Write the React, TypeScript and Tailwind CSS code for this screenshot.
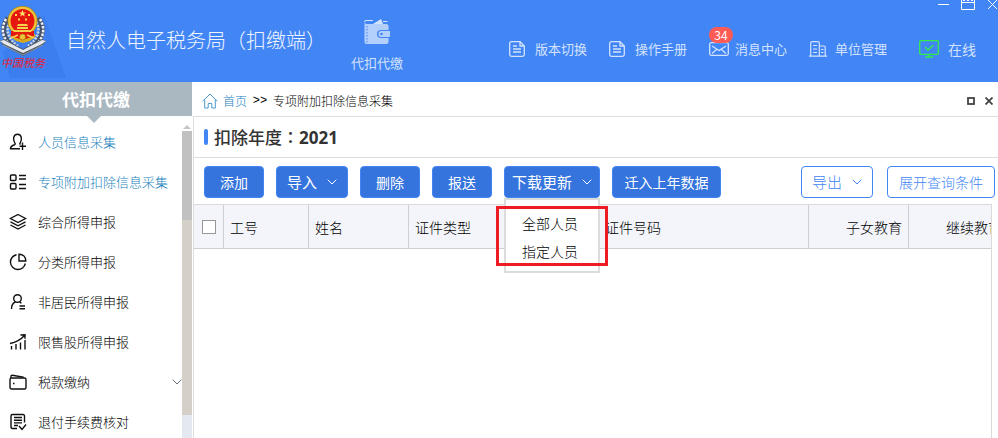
import React from 'react';
import { clsx } from 'clsx';

const Chevron = ({ className }: { className?: string }) => (
    <svg viewBox="0 0 10 6" className={clsx("w-[10px] h-[6px] shrink-0", className)} fill="none" stroke="currentColor">
        <path d="M.7.7 5 5 9.3.7" />
    </svg>
);

const Emblem = () => (
    <svg viewBox="0 0 70 82" className="w-[70px] h-[82px]" fill="none">
        <path d="M3 52 44 15 66 78H10Z" fill="#3c7eef" />
        {/* Wheat wreath */}
        <path d="M8 18C1 27 2 40 16 48M38 18c7 9 6 22-8 30" stroke="#46536a" strokeWidth="5" />
        <path d="M6 19C0 29 2 41 16 49M40 19c6 10 4 22-10 30" stroke="#eef1f5" strokeWidth="2.500" strokeDasharray="2.500 1.300" />
        <path d="M10 22C5 30 8 39 18 46M36 22c5 8 2 17-8 24" stroke="#cfd6df" strokeWidth="2.500" strokeDasharray="2 1.300" />
        {/* Ribbon */}
        <path d="m0 41 4-2 19 10 19-10 4 2-3 4-20 11L3 45Z" fill="#4c5663" />
        <path d="m0 41 4-1 19 10 19-10 4 1-4 3-19 9L4 44Z" fill="#e6eaef" />
        <path d="m3 45 20 10 20-10" stroke="#8d97a5" />
        {/* National emblem */}
        <path d="M10 36c2-3 5-4 7-4h12c2 0 5 1 7 4l-6 5-7 2-7-2Z" fill="#d9a91f" />
        <circle cx="22.500" cy="21" r="15" fill="#b98a16" />
        <circle cx="22.500" cy="21" r="14.200" fill="#efc63a" />
        <circle cx="22.500" cy="21" r="12" fill="#e5170f" />
        <path d="M11 31h23v5l-11.500 4L11 36Z" fill="#e5170f" />
        <path d="m22.500 10 1 2.400 2.600.1-2.100 1.600.8 2.500-2.300-1.500-2.300 1.500.8-2.500-2.100-1.600 2.600-.1Z" fill="#ffe36b" />
        <path d="M15 14h2v2h-2zM28 14h2v2h-2zM18 18.500h2v2h-2zM25 18.500h2v2h-2z" fill="#ffd94d" />
        <path d="M18 24h9l1 2H17ZM17 27h11v2H17ZM13.500 30h18v2h-18Z" fill="#f6d04a" />
        <circle cx="22.500" cy="37" r="3" fill="#efc63a" stroke="#a87508" strokeWidth=".7" />
        <path d="m11 38 7-3M34 38l-7-3" stroke="#f6d04a" strokeWidth="1.500" />
    </svg>
);

const DocIcon = () => (
    <svg viewBox="0 0 16 16" className="w-4 h-4" fill="none" stroke="currentColor" strokeWidth="1.300">
        <path d="M11 .7H2.500Q.7.7.7 2.500v11q0 1.800 1.800 1.800h11q1.800 0 1.800-1.800V5Z" />
        <path d="M11 .7V5h4.300M4 5h4M4 8h8M4 11h8" />
    </svg>
);

const MailIcon = () => (
    <svg viewBox="0 0 20 14" className="w-5 h-[14px]" fill="none" stroke="currentColor" strokeWidth="1.300">
        <rect x=".7" y=".7" width="18.600" height="12.600" rx="1.500" />
        <path d="m3 4 7 4.500L17 4M3 11.500 7.500 7.500M17 11.500l-4.500-4" />
    </svg>
);

const BuildingIcon = () => (
    <svg viewBox="0 0 18 16" className="w-[18px] h-4" fill="none" stroke="currentColor" strokeWidth="1.200">
        <path d="M0 15.200h18M1.700 15V2q0-1.300 1.300-1.300h6q1.300 0 1.300 1.300v13M10.300 5H15q1.200 0 1.200 1.200V15" />
        <path d="M4 4.500h4M4 8h4M4 11.500h4M12 8.500h2.500M12 11.500h2.500" />
    </svg>
);

const MonitorIcon = () => (
    <svg viewBox="0 0 20 18" className="w-5 h-[18px]" fill="none" stroke="#35ea4e" strokeWidth="1.300">
        <rect x=".7" y=".7" width="18.600" height="13.600" rx="1" />
        <path d="m6 7 3 3 5.500-5M10 14.500v2M6 17h8" />
    </svg>
);

const icon = (children: React.ReactNode) => (
    <svg viewBox="0 0 18 18" className="w-[18px] h-[18px] shrink-0" fill="none" stroke="#111" strokeWidth="1.400">
        {children}
    </svg>
);

const navItems = [
    {
        label: '人员信息采集',
        active: true,
        icon: icon(<path d="M11 15.800H1.500c0-3 2-3.300 4-4 1-.4.900-1.200.3-2C3.800 7 4 1.200 8.500 1.200s4.700 5.800 2.700 8.600c-.5.800-.7 1.300.3 1.700M13.500 9.500v7.500M10.500 13.200H17" />),
    },
    {
        label: '专项附加扣除信息采集',
        active: true,
        icon: icon(<><rect x="1.500" y="2" width="5.500" height="5.500" rx="1" /><rect x="1.500" y="10.500" width="5.500" height="5.500" rx="1" /><path d="M10 2.500h7M10 6h7M10 11.500h7M10 15.500h7" /></>),
    },
    {
        label: '综合所得申报',
        icon: icon(<path d="m9 1.500 7.500 4L9 9.500l-7.500-4ZM1.500 8.800 9 12.800l7.500-4M1.500 12 9 16l7.500-4" />),
    },
    {
        label: '分类所得申报',
        icon: icon(<><path d="M7.500 1.700A7.500 7.500 0 1 0 16.300 10.500" /><path d="M10 1.200V8h6.800c0-4-2.800-6.800-6.800-6.800Z" /></>),
    },
    {
        label: '非居民所得申报',
        icon: icon(<><circle cx="8.500" cy="5.500" r="3.800" /><path d="M6.500 9C3.500 10 2.500 12.500 2.500 16M10.500 9.200l2 1M10.500 13h5.500M10.500 15.800h5.500" /></>),
    },
    {
        label: '限售股所得申报',
        icon: icon(<path d="M2.500 16.500v-3.500M7 16.500V11M11.500 16.500V9.500M16 16.500V7M1 10.500C6 9.500 11.500 7 15.500 2.500M11.500 2l4.500-.3v4" />),
    },
    {
        label: '税款缴纳',
        expandable: true,
        icon: icon(<><rect x="1" y="5" width="16" height="11" rx="1.500" /><path d="M2 5V3.500q0-1.300 1.300-1.200L14 4v1M4 10.500h1.500" /></>),
    },
    {
        label: '退付手续费核对',
        icon: icon(<path d="M15.500 9.500V3q0-1.500-1.500-1.500H3.500Q2 1.500 2 3v11q0 1.500 1.500 1.500H8M5 4.500h8M5 7.200h8M5 9.900h8M5 12.500h4M10 13l3 3.500 4-5" />),
    },
];

const tools = [
    { label: '版本切换', icon: <DocIcon /> },
    { label: '操作手册', icon: <DocIcon /> },
    { label: '消息中心', icon: <MailIcon />, badge: 34 },
    { label: '单位管理', icon: <BuildingIcon /> },
];

const columns = [
    { label: '工号', width: 'w-[85px]' },
    { label: '姓名', width: 'w-[100px]' },
    { label: '证件类型', width: 'w-[190px]' },
    { label: '证件号码', width: 'w-[210px]' },
    { label: '子女教育', width: 'w-[100px]', right: true },
    { label: '继续教育', width: 'w-[100px]', right: true },
];

const primary = "h-8 rounded bg-[#3574dc] border border-[#4285f5] text-white text-sm";
const outline = "h-8 rounded bg-white border border-[#4285f5] text-[#4285f5] font-light";

const Header = () => (
    <header className="relative h-[82px] shrink-0 flex bg-[#4285f5] text-[#d3e3fd]">
        <div className="relative w-[66px] shrink-0">
            <Emblem />
            <span className="absolute left-0 top-[54px] w-[46px] text-center text-[11px] leading-[16px] italic text-[#e8202c] whitespace-nowrap">中国税务</span>
        </div>
        <h1 className="h-20 flex items-center text-xl font-light text-[#f0f6ff] whitespace-nowrap">自然人电子税务局（扣缴端）</h1>
        <a href="#withhold" className="mt-[19px] ml-[25px] flex flex-col items-center text-[13px] leading-[18px] whitespace-nowrap">
            <svg viewBox="0 0 28 26" className="w-[28px] h-[26px] mb-[9px]">
                <path d="M1.500 3q0-1.500 1.500-1.500h7M20 2.500h4.500" stroke="#d3e3fd" fill="none" />
                <path d="m10 5 8-5 2 5Z" fill="#d3e3fd" />
                <path d="M1.500 3Q2 5 4 5h19q2.500 0 2.500 2v4H18q-4 0-4 4t4 4h7.500v4q0 2-2 2H3.500q-2 0-2-2Z" fill="#b3cffb" />
                <path d="M4 7v17" stroke="#4285f5" strokeDasharray="1.500 1.500" />
                <path d="M18 12h9v6h-9q-2.500 0-2.500-3t2.500-3Z" fill="#b3cffb" />
                <circle cx="18.500" cy="15" r="1.300" fill="#4285f5" />
            </svg>
            代扣代缴
        </a>
        <nav className="ml-auto mt-[15px] pr-[22px] flex items-center gap-[22px] text-[13px] whitespace-nowrap">
            {tools.map((item) => (
                <a key={item.label} href="#tool" className="relative flex items-center">
                    <span className="w-[26px]">{item.icon}</span>
                    {item.label}
                    {item.badge && (
                        <span className="absolute left-0 -top-3 w-6 h-4 rounded-full bg-[#ff5b55] text-white text-xs leading-4 text-center">{item.badge}</span>
                    )}
                </a>
            ))}
            <a href="#status" className="ml-2.5 flex items-center text-sm">
                <span className="w-[29px]"><MonitorIcon /></span>
                在线
            </a>
        </nav>
        <div className="absolute right-0 top-0 flex gap-3 text-white">
            <button aria-label="最小化" className="w-[11px] h-[10px]">
                <svg viewBox="0 0 11 10" fill="none" stroke="currentColor"><path d="M0 4.500h11" /></svg>
            </button>
            <button aria-label="还原" className="w-[14px] h-[10px]">
                <svg viewBox="0 0 14 10" fill="none" stroke="currentColor"><path d="M.5 0v9.500h13V0M0 2.500h14M2 .5h2M6 .5h2M10 .5h2" /></svg>
            </button>
            <button aria-label="关闭" className="w-[11px] h-[10px]">
                <svg viewBox="0 0 11 10" fill="none" stroke="currentColor"><path d="m1 0 9 9M10 0 1 9" /></svg>
            </button>
        </div>
    </header>
);

const Sidebar = () => (
    <aside className="w-48 shrink-0 flex flex-col bg-white">
        <h2 className="relative h-[34px] shrink-0 flex items-center justify-center bg-[#aab8c2] text-white text-[17px] font-bold">
            代扣代缴
            <svg viewBox="0 0 14 7" className="absolute top-full left-[87px] w-[14px] h-[7px]"><path d="M0 0h14L7 7Z" fill="#aab8c2" /></svg>
        </h2>
        <div className="flex-1 min-h-0 flex">
            <nav className="flex-1 pt-[6px] overflow-hidden">
                {navItems.map((item) => (
                    <a
                        key={item.label}
                        href="#nav"
                        className={clsx(
                            "h-10 pl-[9px] flex items-center gap-[11px] text-[13px] font-light whitespace-nowrap",
                            item.active ? "text-[#1a7fbd]" : "text-black"
                        )}
                    >
                        {item.icon}
                        {item.label}
                        {item.expandable && <Chevron className="ml-auto text-gray-500" />}
                    </a>
                ))}
            </nav>
            {/* Scrollbar */}
            <div className="w-[10px] flex flex-col bg-[#e4e9f1]">
                <div className="h-[15px] pt-2 bg-white">
                    <svg viewBox="0 0 10 5" className="w-[10px] h-[5px]"><path d="M1 5h8L5 1Z" fill="#c6c6c6" /></svg>
                </div>
                <div className="h-[89px] bg-[#c1c1c1]"></div>
                <div className="flex-1 mb-[23px] bg-[#d4d0c8]"></div>
            </div>
        </div>
    </aside>
);

const Toolbar = () => (
    <div className="h-[46px] pt-[2px] pl-[10px] pr-[3px] flex items-center gap-3 whitespace-nowrap">
        <button className={clsx(primary, "w-[60px]")}>添加</button>
        <button className={clsx(primary, "w-[72px] flex items-center justify-between px-[10px] text-[15px]")}>导入<Chevron /></button>
        <button className={clsx(primary, "w-[60px]")}>删除</button>
        <button className={clsx(primary, "w-[60px]")}>报送</button>
        <div className="relative">
            <button aria-expanded="true" className={clsx(primary, "w-24 flex items-center justify-between px-[7px] text-[15px]")}>下载更新<Chevron /></button>
            <div className="absolute z-10 top-full left-0 w-24 h-[75px] pt-[9px] bg-white border-2 border-[#dcdcdc] text-sm font-light text-black">
                <button className="block w-full h-7 pl-4 text-left">全部人员</button>
                <button className="block w-full h-7 pl-4 text-left">指定人员</button>
            </div>
            {/* Highlight frame around the menu entries */}
            <div className="absolute z-20 top-10 -left-2 w-28 h-[60px] border-[3px] border-[#ed1c24] pointer-events-none"></div>
        </div>
        <button className={clsx(primary, "w-[109px]")}>迁入上年数据</button>
        <div className="ml-auto flex gap-[14px]">
            <button className={clsx(outline, "w-[72px] flex items-center justify-between px-[10px] text-[15px]")}>导出<Chevron /></button>
            <button className={clsx(outline, "w-[108px] text-sm")}>展开查询条件</button>
        </div>
    </div>
);

const App = () => {
    return (
        <div className="h-screen flex flex-col overflow-hidden bg-white font-['Noto_Sans_CJK_SC',sans-serif] text-[#333]">
            <Header />
            <div className="flex-1 min-h-0 flex">
                <Sidebar />
                <main className="flex-1 min-w-0 flex flex-col">
                    <div className="h-[34px] pt-[3px] pl-[10px] pr-[5px] flex items-center text-xs font-light text-black">
                        <svg viewBox="0 0 16 16" className="w-4 h-4 mr-[5px]" fill="none" stroke="#4a9bd0">
                            <path d="M.7 8.200 8 1l7.300 7.200M2.700 7v8h3.500v-4.500h3.600V15h3.500V7" />
                        </svg>
                        <a href="#home" className="text-[#1a7fbd]">首页</a>
                        <span className="w-[26px] text-center font-['Liberation_Mono',monospace]">&gt;&gt;</span>
                        <span>专项附加扣除信息采集</span>
                        <button aria-label="最大化" className="ml-auto">
                            <svg viewBox="0 0 8 8" className="w-2 h-2" fill="none" stroke="#444" strokeWidth="1.800"><rect x="1" y="1" width="6" height="6" /></svg>
                        </button>
                        <button aria-label="关闭" className="ml-[10px]">
                            <svg viewBox="0 0 8 8" className="w-2 h-2" fill="none" stroke="#444" strokeWidth="1.800"><path d="m.5.5 7 7M7.500.5l-7 7" /></svg>
                        </button>
                    </div>
                    <div className="ml-px flex-1 min-h-0 flex flex-col border-l border-t border-[#dedede]">
                        <div className="h-[41px] pl-[10px] flex items-center gap-[6px] border-b border-[#dedede]">
                            <span className="w-1 h-4 rounded-sm bg-[#4285f5]"></span>
                            <h3 className="text-[17px] font-medium">
                                扣除年度<span className="font-['Noto_Sans_CJK_TC',sans-serif]">：</span><span className="font-bold font-['Open_Sans',sans-serif]">2021</span>
                            </h3>
                        </div>
                        <Toolbar />
                        <div className="flex-1 mr-[6px] overflow-hidden border-t border-r border-[#d9d9d9]">
                            <table className="w-[814px] table-fixed border-separate border-spacing-0 text-sm">
                                <thead>
                                    <tr className="h-11 bg-[#f4f5fa]">
                                        <th className="w-[30px] pl-px border-r border-b border-[#cfd0d4]">
                                            <input type="checkbox" aria-label="全选" className="block mx-auto w-[14px] h-[14px] appearance-none bg-white border border-[#999]" />
                                        </th>
                                        {columns.map((col) => (
                                            <th key={col.label} className={clsx("px-[6px] font-light text-black border-r border-b border-[#cfd0d4]", col.width, col.right ? "text-right" : "text-left")}>
                                                {col.label}
                                            </th>
                                        ))}
                                    </tr>
                                </thead>
                            </table>
                        </div>
                    </div>
                </main>
            </div>
        </div>
    );
};

export default App;
